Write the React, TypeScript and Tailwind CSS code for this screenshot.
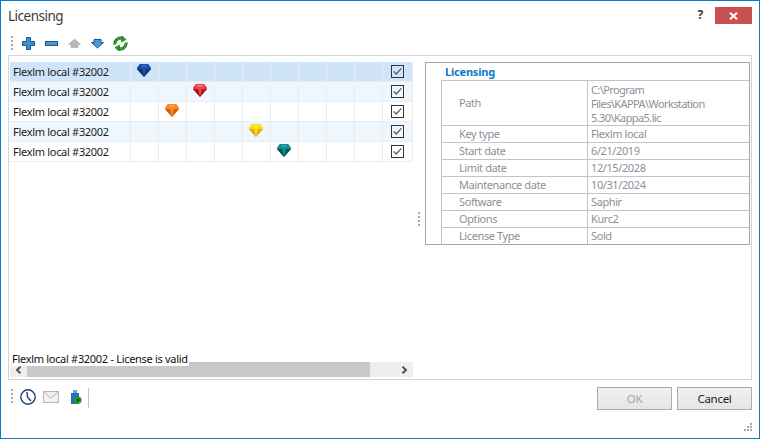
import React from "react";

const cols = [0, 1, 2, 3, 4, 5, 6, 7, 8];

function Gem({ top, mid, dark, light }: { top: string; mid: string; dark: string; light: string }) {
  return (
    <svg width="14" height="13" viewBox="0 0 14 13" className="block">
      <polygon points="3,0 11,0 14,4 14,5 7,13 0,5 0,4" fill={mid} />
      <polygon points="3,0 11,0 14,4 14,5 0,5 0,4" fill={top} />
      <polygon points="5,5 9,5 7,13" fill={light} opacity="0.45" />
      <polygon points="0,5 5,5 7,13" fill={dark} />
      <polygon points="14,5 9,5 7,13" fill={dark} opacity="0.8" />
      <polygon points="5,1 9,1 10,3 4,3" fill={light} opacity="0.7" />
    </svg>
  );
}

const gems: Record<string, { top: string; mid: string; dark: string; light: string }> = {
  blue: { top: "#1f4fa8", mid: "#143f91", dark: "#0e2f74", light: "#3d6cc0" },
  red: { top: "#ef4550", mid: "#d81e2a", dark: "#a8121d", light: "#f88890" },
  orange: { top: "#f98a20", mid: "#ee7410", dark: "#d45f08", light: "#fbb060" },
  yellow: { top: "#fbe010", mid: "#f4c810", dark: "#dca808", light: "#fdf070" },
  teal: { top: "#0f8f8f", mid: "#077070", dark: "#035050", light: "#35b0b0" },
};

const rows = [
  { gem: "blue", col: 0, bg: "bg-[#cfe4f8]" },
  { gem: "red", col: 2, bg: "bg-[#eef7fe]" },
  { gem: "orange", col: 1, bg: "bg-white" },
  { gem: "yellow", col: 4, bg: "bg-[#eef7fe]" },
  { gem: "teal", col: 5, bg: "bg-white" },
];

const props: [string, string][] = [
  ["Key type", "Flexlm local"],
  ["Start date", "6/21/2019"],
  ["Limit date", "12/15/2028"],
  ["Maintenance date", "10/31/2024"],
  ["Software", "Saphir"],
  ["Options", "Kurc2"],
  ["License Type", "Sold"],
];

function Grip({ className = "" }: { className?: string }) {
  return (
    <div className={`flex flex-col gap-[2px] ${className}`}>
      {[0, 1, 2, 3].map((i) => (
        <div key={i} className="w-[2px] h-[2px] bg-[#a8a8a8]" />
      ))}
    </div>
  );
}

function Check() {
  return (
    <svg width="13" height="13" viewBox="0 0 13 13" className="block">
      <rect x="0.5" y="0.5" width="12" height="12" fill="none" stroke="#333" />
      <path d="M2.8 6.4 L5.2 9 L10.4 3.4" fill="none" stroke="#555" strokeWidth="1.2" />
    </svg>
  );
}

export default function App() {
  return (
    <div
      className="w-[760px] h-[439px] bg-white border border-[#0b78c8] flex flex-col overflow-hidden text-[11px] tracking-[-0.3px] text-[#1a1a1a]"
      style={{ fontFamily: '"Noto Sans", "Open Sans", sans-serif' }}
    >
      {/* title bar */}
      <div className="h-[30px] flex items-start shrink-0">
        <div className="ml-[7px] mt-[4px] text-[13.5px] tracking-[-0.5px] leading-[22px] text-[#3a3a3a]">Licensing</div>
        <div className="ml-auto mr-[7px] flex items-start">
          <div className="mt-[6px] mr-[12px] text-[12px] font-bold leading-[16px] text-[#333]">?</div>
          <div className="w-[37px] h-[17px] mt-[6px] bg-[#c75050] flex items-center justify-center">
            <svg width="9" height="8" viewBox="0 0 9 8">
              <path d="M1 0.8 L8 7.2 M8 0.8 L1 7.2" stroke="#fff" strokeWidth="2" />
            </svg>
          </div>
        </div>
      </div>

      {/* top toolbar */}
      <div className="h-[24px] ml-[10px] flex items-center shrink-0">
        <Grip />
        <div className="ml-[8px] flex items-center gap-[8px]">
          <svg width="15" height="15" viewBox="0 0 15 15">
            <path d="M5.5 1.5h4v4h4v4h-4v4h-4v-4h-4v-4h4z" fill="#3f8fd0" stroke="#18578f" />
          </svg>
          <svg width="15" height="15" viewBox="0 0 15 15">
            <rect x="1.5" y="5.5" width="12" height="4" fill="#4d96d2" stroke="#18578f" />
          </svg>
          <svg width="15" height="15" viewBox="0 0 15 15">
            <path d="M1.5 8.5 L7.5 3 L13.5 8.5 L11 8.5 L11 11.5 L4 11.5 L4 8.5 Z" fill="#b8b8b8" stroke="#a8a8a8" strokeWidth="0.6" />
          </svg>
          <svg width="15" height="15" viewBox="0 0 15 15">
            <path d="M4 3.5 L11 3.5 L11 6.5 L13.5 6.5 L7.5 12 L1.5 6.5 L4 6.5 Z" fill="#4d96d2" stroke="#18578f" />
          </svg>
          <svg width="15" height="15" viewBox="0 0 15 15" fill="none">
            <path d="M2 8.5 A5.5 5.5 0 0 1 9.5 2.5" stroke="#0c6e0c" strokeWidth="3" />
            <path d="M2 8.5 A5.5 5.5 0 0 1 9.5 2.5" stroke="#58c858" strokeWidth="1" />
            <path d="M9 0 L13 3.5 L8.5 6 Z" fill="#2a9a2a" stroke="#0c6e0c" strokeWidth="0.6" />
            <path d="M13 6.5 A5.5 5.5 0 0 1 5.5 12.5" stroke="#0c6e0c" strokeWidth="3" />
            <path d="M13 6.5 A5.5 5.5 0 0 1 5.5 12.5" stroke="#58c858" strokeWidth="1" />
            <path d="M6 15 L2 11.5 L6.5 9 Z" fill="#2a9a2a" stroke="#0c6e0c" strokeWidth="0.6" />
          </svg>
        </div>
      </div>

      {/* main panel */}
      <div className="mx-[7px] h-[325px] border border-[#d4d4d4] flex shrink-0">
        <div className="w-[403px] ml-px mt-[6px] mb-[2px] flex flex-col relative shrink-0">
          <div className="flex flex-col flex-1">
            {rows.map((r, i) => (
              <div key={i} className={`h-[20px] flex border-b border-[#ececec] ${r.bg}`}>
                <div className="w-[121px] pl-[3px] leading-[20px] border-r border-[#ececec] whitespace-nowrap">Flexlm local #32002</div>
                {cols.map((c) => (
                  <div key={c} className="w-[28px] border-r border-[#ececec] flex items-start justify-center pt-[2px] pr-px">
                    {r.col === c && <Gem {...gems[r.gem]} />}
                  </div>
                ))}
                <div className="flex-1 border-r border-[#ececec] flex items-center justify-center">
                  <Check />
                </div>
              </div>
            ))}
          </div>
          <div className="h-[15px] bg-[#eeeeee] flex items-center shrink-0">
            <div className="w-[17px] h-full flex items-center justify-center">
              <svg width="7" height="8" viewBox="0 0 7 8">
                <path d="M5.5 0.8 L2 4 L5.5 7.2" fill="none" stroke="#505050" strokeWidth="2" />
              </svg>
            </div>
            <div className="w-[343px] h-full bg-[#c8c8c8]" />
            <div className="ml-auto w-[17px] h-full flex items-center justify-center">
              <svg width="7" height="8" viewBox="0 0 7 8">
                <path d="M1.5 0.8 L5 4 L1.5 7.2" fill="none" stroke="#505050" strokeWidth="2" />
              </svg>
            </div>
          </div>
          <div className="absolute left-[2px] bottom-[11px] bg-white leading-[14px] h-[14px] pr-px text-[#111] whitespace-nowrap">
            Flexlm local #32002 - License is valid
          </div>
        </div>

        <div className="w-[12px] shrink-0 flex justify-center pt-[156px]">
          <Grip className="h-fit" />
        </div>

        <div className="w-[325px] h-[183px] mt-[6px] border border-[#a6a6a6] flex flex-col shrink-0 text-[#8e8e9a]">
          <div className="h-[17px] pl-[19px] font-bold text-[#0a78c8] text-[11px] tracking-[-0.2px] leading-[17px]">Licensing</div>
          <div className="ml-[15px] border-l border-t border-[#c4c4c4] flex-1 flex flex-col tracking-[-0.4px]">
            <div className="h-[45px] flex border-b border-[#c4c4c4]">
              <div className="w-[146px] pl-[17px] border-r border-[#c4c4c4] flex items-center">Path</div>
              <div className="flex-1 pl-[3px] leading-[14px] pt-[2px] tracking-[-0.6px]">C:\Program<br />Files\KAPPA\Workstation<br />5.30\Kappa5.lic</div>
            </div>
            {props.map(([k, v]) => (
              <div key={k} className="h-[17px] last:h-[16px] flex border-b border-[#c4c4c4] last:border-b-0 leading-[16px]">
                <div className="w-[146px] pl-[17px] border-r border-[#c4c4c4]">{k}</div>
                <div className="flex-1 pl-[3px]">{v}</div>
              </div>
            ))}
          </div>
        </div>
      </div>

      {/* footer */}
      <div className="flex-1 flex items-start relative">
        <div className="ml-[10px] mt-[8px] flex items-start h-[20px]">
          <Grip className="mt-px" />
          <svg width="16" height="16" viewBox="0 0 16 16" className="ml-[7px] mt-px" fill="none">
            <circle cx="8" cy="8" r="7.2" fill="#fff" stroke="#1d3f75" strokeWidth="1.4" />
            <path d="M7 3 L7.5 8 L11 12" stroke="#1d3f75" strokeWidth="1.4" />
          </svg>
          <svg width="16" height="12" viewBox="0 0 16 12" className="ml-[7px] mt-[3px]" fill="none">
            <rect x="0.5" y="0.5" width="15" height="11" fill="#f0f0f0" stroke="#b4b4b4" />
            <path d="M1 1 L8 7 L15 1" stroke="#b4b4b4" />
          </svg>
          <svg width="11" height="15" viewBox="0 0 11 15" className="ml-[12px] mt-[2px]">
            <rect x="2" y="0" width="4" height="3" fill="#6b9fd0" />
            <rect x="0" y="3" width="8" height="11" fill="#2a6db8" />
            <circle cx="7" cy="10" r="3.6" fill="#18a018" />
            <circle cx="7" cy="10" r="1.3" fill="#0c3f0c" />
          </svg>
          <div className="ml-[6px] w-px h-[20px] bg-[#c4c4c4]" />
        </div>
        <div className="ml-auto mr-[7px] mt-[7px] flex gap-[5px]">
          <div className="w-[75px] h-[23px] border border-[#adadad] bg-linear-to-b from-[#f0f0f0] to-[#e5e5e5] flex items-center justify-center text-[11.5px] text-[#a8a8a8]">OK</div>
          <div className="w-[75px] h-[23px] border border-[#adadad] bg-linear-to-b from-[#f0f0f0] to-[#e5e5e5] flex items-center justify-center text-[11.5px] text-[#222]">Cancel</div>
        </div>
        <svg width="8" height="8" viewBox="0 0 8 8" className="absolute right-[7px] bottom-[7px]" fill="#a8a8a8">
          <rect x="6" y="0" width="2" height="2" />
          <rect x="3" y="3" width="2" height="2" />
          <rect x="6" y="3" width="2" height="2" />
          <rect x="0" y="6" width="2" height="2" />
          <rect x="3" y="6" width="2" height="2" />
          <rect x="6" y="6" width="2" height="2" />
        </svg>
      </div>
    </div>
  );
}
